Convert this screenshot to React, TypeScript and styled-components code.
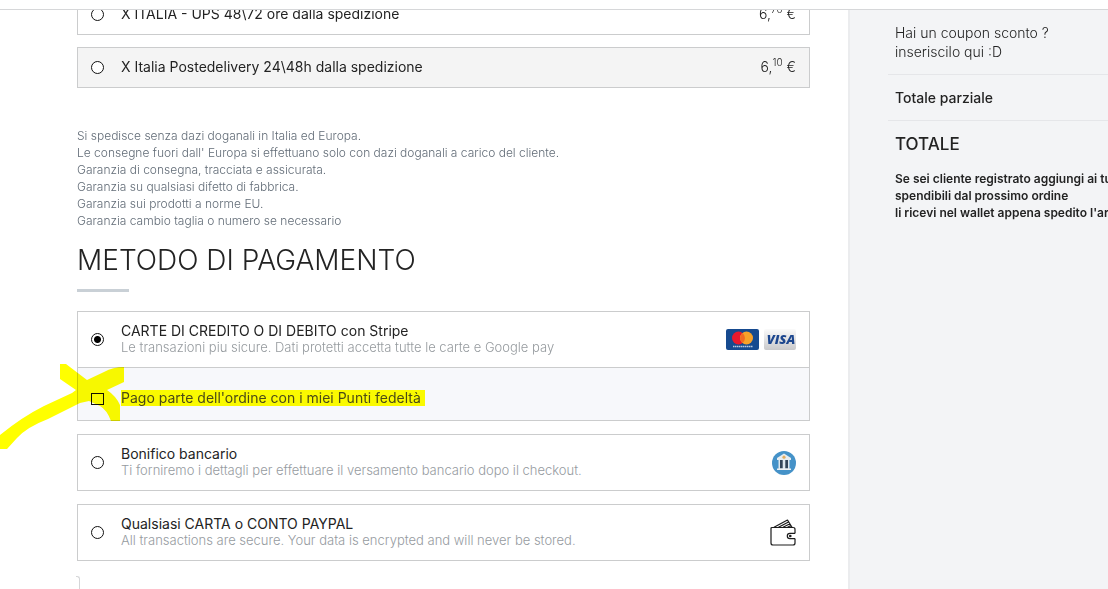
import React from "react";
import styled, { createGlobalStyle } from "styled-components";

const GlobalStyle = createGlobalStyle`
  *, *::before, *::after { box-sizing: border-box; }
  body { margin: 0; background: #fff; color: #232323; font-family: Inter, "Liberation Sans", sans-serif; font-size: 14px; line-height: 17px; }
  h2, p { margin: 0; }
`;

const Page = styled.div`
  display: flex;
  flex-direction: column;
  height: 100vh;
`;

const TopBar = styled.header`
  flex: none;
  height: 10px;
  border-bottom: 1px solid #d6d7d9;
`;

const Viewport = styled.div`
  flex: 1;
  min-height: 0;
  display: flex;
  overflow: hidden;
`;

const Main = styled.main`
  flex: 1;
  min-width: 0;
  padding: 0 38px 0 77px;
`;

const ShippingList = styled.div`
  display: flex;
  flex-direction: column;
  gap: 12px;
  margin-top: -16px;
`;

const Row = styled.label<{ $height: number; $top?: number }>`
  display: flex;
  align-items: center;
  gap: 17px;
  min-height: ${(p) => p.$height}px;
  padding: ${(p) => p.$top ?? 0}px 13px 0;
`;

const Card = styled.div<{ $shaded?: boolean }>`
  position: relative;
  border: 1px solid #cbcccd;
  background: ${(p) => (p.$shaded ? "#f4f4f4" : "#fff")};
`;

const Radio = styled.input`
  appearance: none;
  flex: none;
  width: 13px;
  height: 13px;
  margin: 0;
  border: 1px solid #111;
  border-radius: 50%;
  background: #fff;
  &:checked { background: radial-gradient(circle, #000 0 3px, #fff 4px); }
`;

const Checkbox = styled.input`
  appearance: none;
  flex: none;
  width: 13px;
  height: 12px;
  margin: 0;
  border: 1px solid #111;
`;

const Labels = styled.span`
  flex: 1;
  min-width: 0;
  display: flex;
  flex-direction: column;
  padding-bottom: 2px;
`;

const Title = styled.span`
  font-size: 14px;
`;

const Detail = styled.span`
  font-size: 13px;
  font-weight: 300;
  color: #969b9f;
`;

const Price = styled.span`
  padding-bottom: 2px;
  font-size: 14px;
  font-weight: 300;
  sup { font-size: 10px; line-height: 0; }
`;

const Notes = styled.p`
  margin-top: 39px;
  font-size: 12px;
  font-weight: 300;
  color: #626c77;
`;

const Heading = styled.h2`
  margin-top: 15px;
  font-size: 28px;
  line-height: 32px;
  font-weight: 300;
  &::after {
    content: "";
    display: block;
    width: 52px;
    height: 3px;
    margin-top: 13px;
    background: #c9d0d6;
  }
`;

const PaymentList = styled.div`
  display: flex;
  flex-direction: column;
  gap: 13px;
  margin-top: 19px;
`;

const Points = styled.div`
  border-top: 1px solid #cbcccd;
  background: #f7f8fb;
`;

const Mark = styled.mark`
  align-self: flex-start;
  padding-right: 4px;
  background: #fafa00;
  color: #4b4a16;
  font-size: 14px;
  line-height: 16px;
`;

const Brush = styled.svg`
  position: absolute;
  left: -78px;
  bottom: -30px;
  pointer-events: none;
  mix-blend-mode: multiply;
`;

const Logos = styled.span`
  display: flex;
  gap: 5px;
`;

const NextPanel = styled.div`
  width: 4px;
  height: 20px;
  margin: 15px 0 0 -1px;
  border: 1px solid #d5d6d8;
  border-width: 1px 1px 0 0;
  border-radius: 0 3px 0 0;
`;

const Sidebar = styled.aside`
  flex: none;
  width: 260px;
  padding-left: 38px;
  border-left: 2px solid #ebecee;
  background: #f3f4f6;
  white-space: nowrap;
  overflow: hidden;
`;

const Block = styled.div`
  padding: 13px 0 13px 7px;
  border-bottom: 1px solid #e5e6e9;
`;

const Coupon = styled.p`
  font-weight: 300;
  line-height: 19px;
`;

const Subtotal = styled.p`
  font-weight: 500;
  line-height: 19px;
`;

const Total = styled.p`
  padding: 13px 0 0 7px;
  font-size: 17px;
  line-height: 20px;
  font-weight: 500;
`;

const Loyalty = styled.p`
  padding: 16px 0 0 7px;
  font-size: 12px;
  font-weight: 600;
`;

const MastercardLogo = () => (
  <svg width="33" height="21" viewBox="0 0 33 21" role="img" aria-label="Mastercard">
    <rect width="33" height="21" rx="2" fill="#164a8f" />
    <circle cx="12.5" cy="9" r="6.5" fill="#e9192d" />
    <circle cx="20.5" cy="9" r="6.5" fill="#f8a229" />
    <path d="M16.5 3.9a6.5 6.5 0 0 1 0 10.2a6.5 6.5 0 0 1 0-10.2" fill="#f26a22" />
    <path d="M7 17.5h19.5" stroke="#b8c9df" strokeWidth="1.6" strokeDasharray="1.5 .5" />
  </svg>
);

const VisaLogo = () => (
  <svg width="32" height="21" viewBox="0 0 32 21" role="img" aria-label="Visa">
    <defs>
      <linearGradient id="visaBack" x1="0" y1="0" x2="0" y2="1">
        <stop offset="0" stopColor="#fafafa" />
        <stop offset="1" stopColor="#c9c9cb" />
      </linearGradient>
    </defs>
    <rect width="32" height="21" rx="2" fill="url(#visaBack)" />
    <text x="17" y="15" textAnchor="middle" fontFamily="Open Sans, sans-serif" fontWeight="800" fontStyle="italic" fontSize="13" fill="#1d478f">VISA</text>
  </svg>
);

const BankIcon = () => (
  <svg width="24" height="24" viewBox="0 0 24 24" aria-hidden="true">
    <circle cx="12" cy="12" r="12" fill="#4592c8" />
    <path d="M12 2.5L5 7v2h14V7z" fill="#e8edf0" />
    <circle cx="12" cy="6.2" r="1.6" fill="#e2ae61" />
    <path d="M6.5 9h11v9h-11z" fill="#dfe9ef" />
    <path d="M8 9h2.7v8.5H8zM13.3 9H16v8.5h-2.7z" fill="#344659" />
    <path d="M5 17.5h14V19H5z" fill="#edf1f3" />
  </svg>
);

const WalletIcon = () => (
  <svg width="26" height="27" viewBox="0 0 26 27" fill="none" stroke="#1c1c1c" strokeWidth="1.2" strokeLinejoin="round" aria-hidden="true">
    <path d="M25 14V10.500Q25 8.500 23 8.500H2Q1 8.500 1 9.500V24Q1 26 3 26H23Q25 26 25 24V20" />
    <path d="M25.300 14.300H20a2.700 2.700 0 0 0 0 5.400h5.300" />
    <path d="M4 8.300L17.500 1L22 8.300M8.500 8.300L18.500 3M13 8.300L20 4.800M17.500 8.300L21 6.500" />
    <circle cx="20.300" cy="17" r=".7" fill="#1c1c1c" />
  </svg>
);

const shipping = [
  { name: "X ITALIA - UPS 48\\72 ore dalla spedizione", cents: "70", shaded: false },
  { name: "X Italia Postedelivery 24\\48h dalla spedizione", cents: "10", shaded: true },
];

type PaymentProps = { title: string; detail: string; checked?: boolean; icon: React.ReactNode };

const Payment = ({ title, detail, checked, icon }: PaymentProps) => (
  <Row $height={55}>
    <Radio type="radio" name="payment" defaultChecked={checked} />
    <Labels>
      <Title>{title}</Title>
      <Detail>{detail}</Detail>
    </Labels>
    {icon}
  </Row>
);

export default function App() {
  return (
    <Page>
      <GlobalStyle />
      <TopBar />
      <Viewport>
        <Main>
          <ShippingList>
            {shipping.map((s) => (
              <Card key={s.name} $shaded={s.shaded}>
                <Row $height={39}>
                  <Radio type="radio" name="shipping" />
                  <Labels><Title>{s.name}</Title></Labels>
                  <Price>6,<sup>{s.cents}</sup> €</Price>
                </Row>
              </Card>
            ))}
          </ShippingList>
          <Notes>
            Si spedisce senza dazi doganali in Italia ed Europa.<br />
            Le consegne fuori dall' Europa si effettuano solo con dazi doganali a carico del cliente.<br />
            Garanzia di consegna, tracciata e assicurata.<br />
            Garanzia su qualsiasi difetto di fabbrica.<br />
            Garanzia sui prodotti a norme EU.<br />
            Garanzia cambio taglia o numero se necessario
          </Notes>
          <Heading>METODO DI PAGAMENTO</Heading>
          <PaymentList>
            <Card>
              <Payment
                checked
                title="CARTE DI CREDITO O DI DEBITO con Stripe"
                detail="Le transazioni piu sicure. Dati protetti accetta tutte le carte e Google pay"
                icon={<Logos><MastercardLogo /><VisaLogo /></Logos>}
              />
              <Points>
                <Row $height={52} $top={9}>
                  <Checkbox type="checkbox" />
                  <Labels><Mark>Pago parte dell'ordine con i miei Punti fedeltà</Mark></Labels>
                </Row>
              </Points>
              <Brush width="126" height="86" viewBox="0 364 126 86" aria-hidden="true">
                <path fill="#ffff00" d="M0 435Q22 417 44 406L72 393L76 390L60 379V364H66L87 380L104 372Q113 367 124 367V382L107 390Q116 396 120 405V421H111Q107 410 100 406L89 401L80 403L48 419Q27 427 17 438L7 449H0Z" />
              </Brush>
            </Card>
            <Card>
              <Payment
                title="Bonifico bancario"
                detail="Ti forniremo i dettagli per effettuare il versamento bancario dopo il checkout."
                icon={<BankIcon />}
              />
            </Card>
            <Card>
              <Payment
                title="Qualsiasi CARTA o CONTO PAYPAL"
                detail="All transactions are secure. Your data is encrypted and will never be stored."
                icon={<WalletIcon />}
              />
            </Card>
          </PaymentList>
          <NextPanel />
        </Main>
        <Sidebar>
          <Block><Coupon>Hai un coupon sconto ?<br />inseriscilo qui :D</Coupon></Block>
          <Block><Subtotal>Totale parziale</Subtotal></Block>
          <Total>TOTALE</Total>
          <Loyalty>
            Se sei cliente registrato aggiungi ai tuoi punti<br />
            spendibili dal prossimo ordine<br />
            li ricevi nel wallet appena spedito l'articolo
          </Loyalty>
        </Sidebar>
      </Viewport>
    </Page>
  );
}
